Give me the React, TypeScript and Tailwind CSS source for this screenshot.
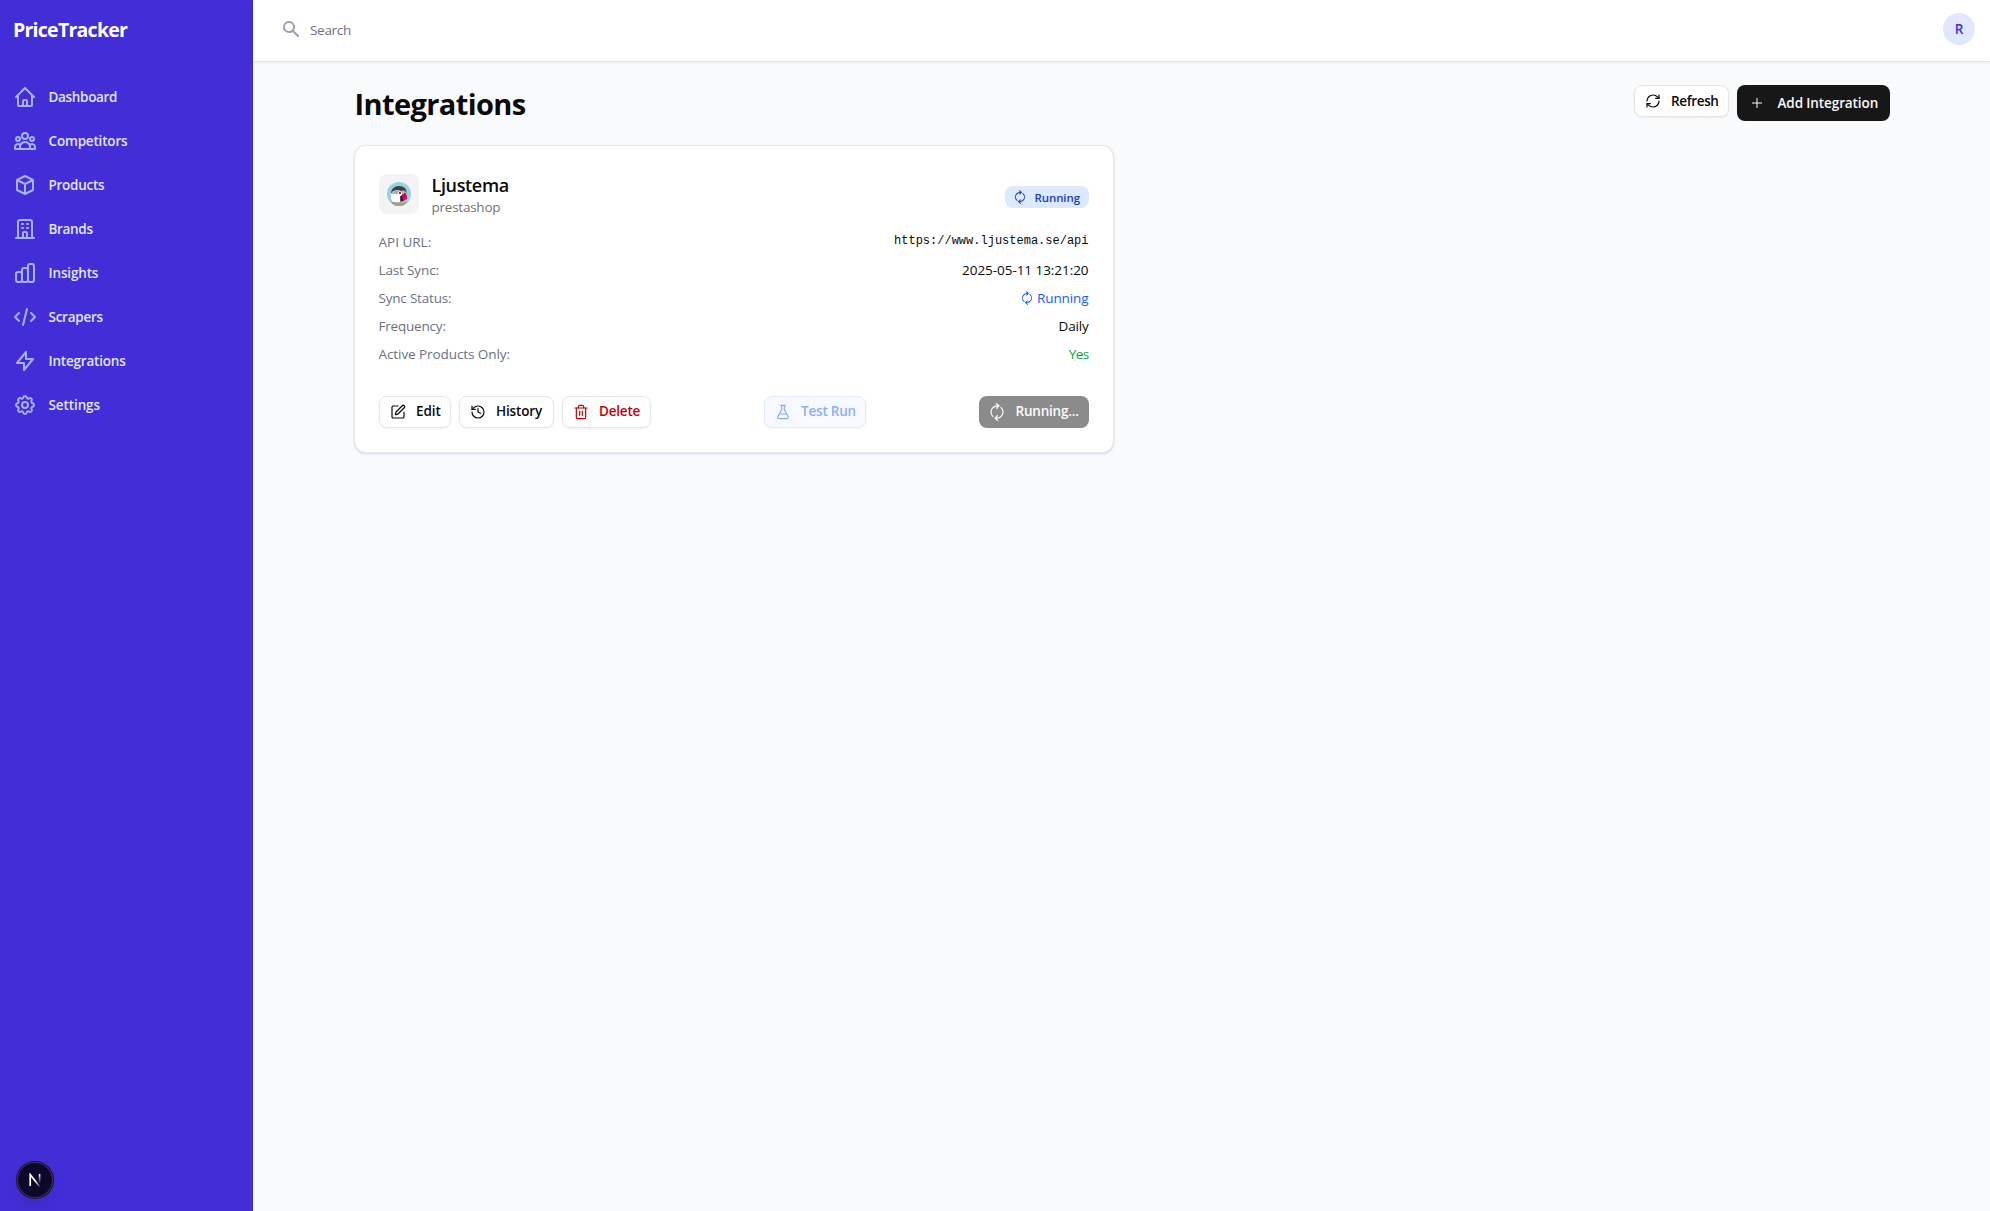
import type { ReactNode } from 'react';
import {
  HiOutlineHome,
  HiOutlineUserGroup,
  HiOutlineCube,
  HiOutlineOfficeBuilding,
  HiOutlineChartBar,
  HiOutlineCode,
  HiOutlineLightningBolt,
  HiOutlineCog,
  HiSearch,
} from 'react-icons/hi';
import { FlaskConical, History, Plus, RefreshCw, SquarePen, Trash2 } from 'lucide-react';

const nav = [
  { label: 'Dashboard', icon: HiOutlineHome, tracking: 'tracking-[-0.32px]' },
  { label: 'Competitors', icon: HiOutlineUserGroup, tracking: 'tracking-[-0.18px]' },
  { label: 'Products', icon: HiOutlineCube, tracking: 'tracking-[-0.26px]' },
  { label: 'Brands', icon: HiOutlineOfficeBuilding, tracking: 'tracking-[-0.32px]' },
  { label: 'Insights', icon: HiOutlineChartBar, tracking: 'tracking-[-0.16px]' },
  { label: 'Scrapers', icon: HiOutlineCode, tracking: 'tracking-[-0.26px]' },
  { label: 'Integrations', icon: HiOutlineLightningBolt, tracking: 'tracking-[-0.2px]' },
  { label: 'Settings', icon: HiOutlineCog, tracking: 'tracking-[-0.1px]' },
];

function Sidebar() {
  return (
    <aside className="flex w-[253px] shrink-0 flex-col bg-[#432dd7]">
      <div className="flex h-[61px] items-center pb-[2px] pl-[13px] text-[19.5px] font-bold tracking-[-0.74px] text-white">
        PriceTracker
      </div>
      <nav className="mt-[14px] flex flex-col">
        {nav.map(({ label, icon: Icon, tracking }) => (
          <a key={label} className="flex h-11 items-center gap-[11.5px] pl-[13px] text-[13.5px] font-semibold text-[#e0e7ff]">
            <Icon className="size-6 text-[#a3b3ff]" />
            <span className={tracking}>{label}</span>
          </a>
        ))}
      </nav>
      <div className="mt-auto mb-[13px] ml-[17px] flex size-9 items-center justify-center rounded-full bg-[#0d0829] shadow-[0_0_0_1px_#171717,inset_0_0_0_1px_#3c3560,0_8px_20px_-6px_rgba(0,0,0,0.2)]">
        <svg viewBox="0 0 12 14" className="h-[14px] w-3" fill="none" strokeWidth="1.7">
          <defs>
            <linearGradient id="stem" x1="0" y1="0" x2="0" y2="1">
              <stop offset="0" stopColor="#fff" />
              <stop offset="1" stopColor="#fff" stopOpacity="0" />
            </linearGradient>
            <linearGradient id="diagonal" gradientUnits="userSpaceOnUse" x1="6" y1="8" x2="11" y2="14">
              <stop offset="0" stopColor="#fff" />
              <stop offset="1" stopColor="#fff" stopOpacity="0.1" />
            </linearGradient>
          </defs>
          <path d="M1.2 13V1.6L10.6 13.6" stroke="url(#diagonal)" />
          <rect x="9.8" y="1" width="1.600" height="9.500" fill="url(#stem)" />
        </svg>
      </div>
    </aside>
  );
}

function OutlineButton({ icon, className = '', children }: { icon: ReactNode; className?: string; children: ReactNode }) {
  return (
    <button
      className={
        'flex h-8 items-center gap-[10.5px] rounded-lg border pl-[10px] text-[13.5px] font-semibold shadow-[0_1px_2px_rgba(0,0,0,0.05)] ' +
        className
      }
    >
      {icon}
      <span className="whitespace-nowrap">{children}</span>
    </button>
  );
}

function Row({ label, tracking, children }: { label: string; tracking: string; children: ReactNode }) {
  return (
    <div className="flex h-5 justify-between">
      <span className={'text-[#6a7282] ' + tracking}>{label}</span>
      {children}
    </div>
  );
}

function PuffinLogo() {
  return (
    <svg viewBox="0 0 24 24" className="size-6">
      <defs>
        <clipPath id="disc">
          <circle cx="12" cy="12" r="12" />
        </clipPath>
      </defs>
      <g clipPath="url(#disc)">
        <rect width="24" height="24" fill="#97d3df" />
        <path d="M4 12C4 7 7 4 12 4c5 0 8 3 7.500 7l-2 3-5 4-6-6z" fill="#3f4149" />
        <path d="M4 12c1-3.500 5-4 8-3.500 3 .5 4 2.500 3 5l-1 6.500H6c-2-2-2.500-5-2-8z" fill="#fff" />
        <path d="M4 12c1.500-3.500 6-4.500 9-3.500l-3 4c-2-1-4-1-6-.5z" fill="#a9adb2" />
        <path d="M14 9c3-1 5 0 5.500 2l-4 1.500z" fill="#e8a08c" />
        <circle cx="13" cy="11" r="1.100" fill="#26272c" />
        <path d="M14.500 13.500 17.500 11c2 1 3.300 3.500 2.500 6l-3.500 2-3 .5z" fill="#df0067" />
        <path d="M13 14.500l2-1.500 1 5.500-2.500 1.500z" fill="#25262d" />
        <path d="M4 19.500c5 1.500 11 1.500 16 0l-2 5H6z" fill="#b39a84" />
      </g>
    </svg>
  );
}

function IntegrationCard() {
  return (
    <section className="flex h-[307.500px] flex-col rounded-xl border border-[#e5e7eb] bg-white px-6 shadow-[0_1px_3px_rgba(0,0,0,0.1),0_1px_2px_-1px_rgba(0,0,0,0.1)]">
      <div className="mt-7 flex h-10 items-center justify-between">
        <div className="flex items-center gap-[13px]">
          <div className="flex size-10 items-center justify-center rounded-lg bg-[#f3f4f6]">
            <PuffinLogo />
          </div>
          <div className="mt-[2px]">
            <h2 className="text-[18px] leading-6 font-semibold tracking-[-0.35px] text-[#0a0a0a]">Ljustema</h2>
            <p className="text-[13.5px] leading-5 tracking-[-0.24px] text-[#737373]">prestashop</p>
          </div>
        </div>
        <span className="mt-[6px] flex h-[22px] w-[84px] items-center gap-[9px] rounded-lg bg-[#dbeafe] pl-[9px] text-[11.5px] font-semibold tracking-[-0.1px] text-[#193cb8]">
          <RefreshCw className="size-3 -rotate-[50deg]" strokeWidth={2} />
          <span className="mt-px">Running</span>
        </span>
      </div>
      <div className="mt-[17.500px] flex flex-col gap-2 text-[13.5px] leading-5 text-[#0a0a0a]">
        <Row label="API URL:" tracking="tracking-[0px]">
          <span className="mt-px font-['Liberation_Mono',monospace] text-[12px] leading-4">https://www.ljustema.se/api</span>
        </Row>
        <Row label="Last Sync:" tracking="tracking-[-0.14px]">
          <span className="tracking-[-0.05px]">2025-05-11 13:21:20</span>
        </Row>
        <Row label="Sync Status:" tracking="tracking-[-0.2px]">
          <span className="flex items-center gap-1 tracking-[-0.1px] text-[#155dfc]">
            <RefreshCw className="size-3 -rotate-[50deg]" strokeWidth={2} />
            Running
          </span>
        </Row>
        <Row label="Frequency:" tracking="tracking-[-0.2px]">
          <span className="tracking-[-0.2px]">Daily</span>
        </Row>
        <Row label="Active Products Only:" tracking="tracking-[-0.08px]">
          <span className="tracking-[-0.6px] text-[#00a63e]">Yes</span>
        </Row>
      </div>
      <div className="mt-8 flex justify-between">
        <div className="flex gap-2">
          <OutlineButton className="w-[72px] border-[#e5e5e5] tracking-[-0.1px] text-[#0a0a0a]" icon={<SquarePen className="size-4" strokeWidth={1.8} />}>
            Edit
          </OutlineButton>
          <OutlineButton className="w-[95px] border-[#e5e5e5] tracking-[-0.15px] text-[#0a0a0a]" icon={<History className="size-4" strokeWidth={1.8} />}>
            History
          </OutlineButton>
          <OutlineButton className="w-[89px] border-[#e5e5e5] tracking-[-0.2px] text-[#c10007]" icon={<Trash2 className="size-4" strokeWidth={1.8} />}>
            Delete
          </OutlineButton>
        </div>
        <OutlineButton
          className="w-[102px] border-[#bedbff] bg-[#eff6ff] tracking-[-0.2px] text-[#155dfc] opacity-50"
          icon={<FlaskConical className="size-4" strokeWidth={1.8} />}
        >
          Test Run
        </OutlineButton>
        <button className="flex h-8 w-[110px] items-center gap-[11px] rounded-lg bg-[#8b8b8b] pl-[10px] text-[13.5px] font-semibold tracking-[-0.2px] text-[#fcfcfc]">
          <RefreshCw className="size-4 -rotate-[50deg]" strokeWidth={1.8} />
          Running...
        </button>
      </div>
    </section>
  );
}

export default function App() {
  return (
    <div className="flex h-[1211px] w-full bg-[#f9fafb] font-['Open_Sans','Noto_Sans',sans-serif]">
      <Sidebar />
      <div className="flex min-w-0 flex-1 flex-col">
        <header className="flex h-[61px] items-center justify-between bg-white pr-[15px] pl-[28px] shadow-[0_1px_3px_rgba(0,0,0,0.1),0_1px_2px_-1px_rgba(0,0,0,0.1)]">
          <div className="flex items-center gap-[9px]">
            <HiSearch className="mb-[3px] size-5 text-[#99a1af]" />
            <span className="text-[13.5px] tracking-[-0.3px] text-[#6a7282]">Search</span>
          </div>
          <div className="mb-[3px] flex size-8 items-center justify-center rounded-full bg-[#e0e7ff] text-[13.5px] font-semibold text-[#432dd7]">
            R
          </div>
        </header>
        <main className="mx-auto flex w-[1536px] flex-col gap-6 pt-6">
          <div className="flex h-9 items-start justify-between">
            <h1 className="pl-px text-[29px] leading-[38px] font-bold tracking-[-0.6px] text-[#0a0a0a]">Integrations</h1>
            <div className="flex items-start gap-2">
              <OutlineButton
                className="w-[95px] border-[#e5e5e5] bg-white tracking-[-0.35px] text-[#0a0a0a]"
                icon={<RefreshCw className="size-4" strokeWidth={1.8} />}
              >
                Refresh
              </OutlineButton>
              <button className="flex h-9 w-[153px] items-center gap-[13px] rounded-lg bg-[#171717] pl-3 text-[13.5px] font-semibold tracking-[-0.1px] text-[#fafafa]">
                <Plus className="size-4" strokeWidth={1.5} />
                Add Integration
              </button>
            </div>
          </div>
          <div className="grid grid-cols-2 gap-4">
            <IntegrationCard />
          </div>
        </main>
      </div>
    </div>
  );
}
